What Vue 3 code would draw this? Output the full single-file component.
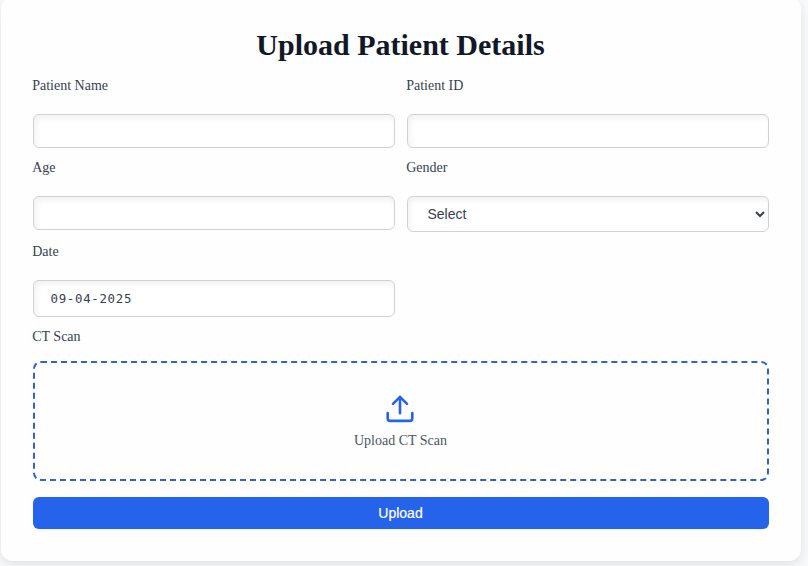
<script setup>
import { ref } from 'vue'

const name = ref('')
const patientId = ref('')
const age = ref('')
const gender = ref('')
const date = ref('09-04-2025')
</script>

<template>
  <main class="page">
    <form class="card" @submit.prevent>
      <h1 class="title">Upload Patient Details</h1>
      <div class="fields">
        <div class="field">
          <label for="name">Patient Name</label>
          <input id="name" v-model="name" class="control" type="text" />
        </div>
        <div class="field">
          <label for="pid">Patient ID</label>
          <input id="pid" v-model="patientId" class="control" type="text" />
        </div>
        <div class="field">
          <label for="age">Age</label>
          <input id="age" v-model="age" class="control" type="text" />
        </div>
        <div class="field">
          <label for="gender">Gender</label>
          <select id="gender" v-model="gender" class="control select">
            <option value="">Select</option>
            <option>Male</option>
            <option>Female</option>
          </select>
        </div>
        <div class="field">
          <label for="date">Date</label>
          <input id="date" v-model="date" class="control date" type="text" />
        </div>
      </div>
      <div class="scan-label">CT Scan</div>
      <div class="dropzone">
        <svg class="icon" viewBox="0 0 32 32" fill="none" stroke="currentColor" stroke-width="2.6" stroke-linecap="round" stroke-linejoin="round">
          <path d="M3.7 19v5.5a2.4 2.4 0 0 0 2.4 2.4h19.8a2.4 2.4 0 0 0 2.4-2.4v-5.5" />
          <path d="M9 9.9l7-7 7 7M16 2.9v16.3" />
        </svg>
        <span class="hint">Upload CT Scan</span>
      </div>
      <button class="submit" type="submit">Upload</button>
    </form>
  </main>
</template>

<style>
body {
  background: #f9fafb;
}
</style>

<style scoped>
* {
  box-sizing: border-box;
}
.page {
  height: 566px;
  overflow: hidden;
  padding-left: 1px;
  background: #f9fafb;
  font-family: "Liberation Serif", "Times New Roman", serif;
}
.card {
  width: 800px;
  height: 564px;
  margin-top: -3px;
  padding: 30px 32px 32px;
  border-radius: 12px;
  background: #fefefe;
  box-shadow: 0 4px 12px rgba(0, 0, 0, 0.1);
}
.title {
  margin: 0 1px 0 0;
  font-size: 30px;
  line-height: 36px;
  font-weight: 700;
  text-align: center;
  color: #111827;
}
.fields {
  display: grid;
  grid-template-columns: 1fr 1fr;
  grid-template-rows: 82px 84px 85px;
  column-gap: 12px;
  margin-top: 13px;
}
.field {
  display: flex;
  flex-direction: column;
  gap: 18px;
}
label,
.scan-label {
  margin-left: -0.8px;
  font-size: 14px;
  line-height: 20px;
  color: #374151;
}
.control {
  width: 100%;
  height: 34px;
  margin: 0;
  padding: 0 16px;
  border: 1px solid #d0d1d4;
  border-radius: 6px;
  outline: none;
  background: #fff;
  color: #374151;
  box-shadow: inset 2px 3px 6px rgba(0, 0, 0, 0.06);
}
.select {
  height: 36px;
  padding-left: 15.5px;
  font: 14px "Liberation Sans", Arial, sans-serif;
}
.date {
  height: 37px;
  padding-left: 16.5px;
  font: 12.4px "DejaVu Sans Mono", monospace;
  letter-spacing: 0.7px;
}
.dropzone {
  display: flex;
  flex-direction: column;
  align-items: center;
  height: 120px;
  margin-top: 14px;
  padding-top: 31px;
  border: 2px dashed #2f62cf;
  border-radius: 8px;
}
.icon {
  width: 32px;
  height: 32px;
  margin-right: 2px;
  color: #2563eb;
}
.hint {
  margin: 5px 1px 0 0;
  font-size: 14px;
  line-height: 20px;
  color: #4b5563;
}
.submit {
  display: block;
  width: 100%;
  height: 32px;
  margin-top: 16px;
  padding: 0 1px 0 0;
  border: 0;
  border-radius: 6px;
  background: #2563eb;
  color: #fff;
  font: 14px "Liberation Sans", Arial, sans-serif;
  -webkit-text-stroke: 0.2px #fff;
  box-shadow: 0 1px 2px rgba(0, 0, 0, 0.06);
}
</style>
